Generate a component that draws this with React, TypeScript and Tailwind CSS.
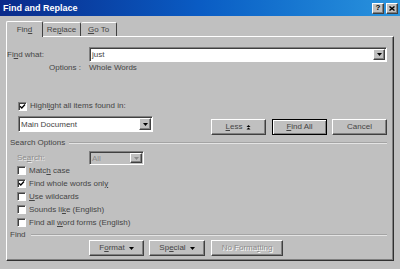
// Find and Replace dialog (classic Windows look)
import React from 'react';

function Arrow({ disabled = false }: { disabled?: boolean }) {
  return (
    <svg width="5" height="3" viewBox="0 0 5 3">
      <polygon points="0,0 5,0 2.5,3" fill={disabled ? '#8a8a8a' : '#000'} />
    </svg>
  );
}

function Combo({ text, className = '', disabled = false }: { text: string; className?: string; disabled?: boolean }) {
  return (
    <div
      className={`flex border border-t-[#808080] border-l-[#808080] border-b-white border-r-white shadow-[inset_1px_1px_0_#404040] ${disabled ? 'bg-[#c0c0c0]' : 'bg-white'} ${className}`}
    >
      <div className={`flex-1 flex items-center pl-[2px] pt-px ${disabled ? 'text-[#8a8a8a]' : 'text-[#454545]'}`}>{text}</div>
      <div className="w-[12px] my-px mr-px flex items-center justify-center bg-[#c0c0c0] border border-t-white border-l-white border-r-[#404040] border-b-[#404040] shadow-[inset_-1px_-1px_0_#808080]">
        <Arrow disabled={disabled} />
      </div>
    </div>
  );
}

function Check({ checked = false, label }: { checked?: boolean; label: React.ReactNode }) {
  return (
    <div className="flex items-center h-[13px] ml-[10px] gap-[3px]">
      <div className="w-[9px] h-[9px] bg-white border border-t-[#808080] border-l-[#808080] border-b-white border-r-white shadow-[inset_1px_1px_0_#404040] flex items-center justify-center">
        {checked && (
          <svg width="7" height="7" viewBox="0 0 7 7">
            <path d="M1 3.2 L2.8 5 L6 1.5" stroke="#000" strokeWidth="1.3" fill="none" />
          </svg>
        )}
      </div>
      <span>{label}</span>
    </div>
  );
}

function Btn({ children, className = '', isDefault = false, disabled = false }: { children: React.ReactNode; className?: string; isDefault?: boolean; disabled?: boolean }) {
  return (
    <div
      className={`h-[16px] flex items-center justify-center gap-[4px] bg-[#c0c0c0] ${
        isDefault
          ? 'border border-black shadow-[inset_1px_1px_0_#fff,inset_-1px_-1px_0_#808080]'
          : 'border border-t-white border-l-white border-r-[#404040] border-b-[#404040] shadow-[inset_-1px_-1px_0_#808080]'
      } ${disabled ? 'text-[#8c8c8c] [text-shadow:1px_1px_0_#fff]' : 'text-[#454545]'} ${className}`}
    >
      {children}
    </div>
  );
}

export default function App() {
  return (
    <div className="w-[400px] h-[269px] overflow-hidden bg-[#c0c0c0] text-[8px] leading-none text-[#454545] font-['Liberation_Sans',Arial,sans-serif]">
      {/* title bar */}
      <div className="h-[16px] flex items-center bg-linear-to-r from-[#0a2a8a] via-[#0a5cc4] to-[#2a94de] pl-[3px] pr-[2px]">
        <span className="flex-1 text-white font-bold text-[9px]">Find and Replace</span>
        <div className="w-[12px] h-[11px] flex items-center justify-center bg-[#c0c0c0] border border-t-white border-l-white border-r-[#404040] border-b-[#404040] shadow-[inset_-1px_-1px_0_#808080] font-bold text-[8px] text-black">
          ?
        </div>
        <div className="w-[12px] h-[11px] ml-[2px] flex items-center justify-center bg-[#c0c0c0] border border-t-white border-l-white border-r-[#404040] border-b-[#404040] shadow-[inset_-1px_-1px_0_#808080]">
          <svg width="6" height="5" viewBox="0 0 6 5">
            <path d="M0.5 0.5 L5.5 4.5 M5.5 0.5 L0.5 4.5" stroke="#000" strokeWidth="1.4" />
          </svg>
        </div>
      </div>

      {/* tabs */}
      <div className="flex items-end h-[16px] mt-[4px] pl-[6px]">
        <div className="relative z-10 -mb-px h-[16px] w-[37px] flex items-center justify-center bg-[#c0c0c0] border-t border-l border-r border-t-white border-l-white border-r-[#404040] rounded-t-[2px]">
          Fin<span className="underline">d</span>
        </div>
        <div className="h-[14px] w-[38px] flex items-center justify-center border-t border-r border-t-white border-r-[#404040] rounded-t-[2px]">
          Re<span className="underline">p</span>lace
        </div>
        <div className="h-[14px] w-[36px] flex items-center justify-center border-t border-r border-t-white border-r-[#404040] rounded-t-[2px]">
          <span className="underline">G</span>o To
        </div>
      </div>

      {/* tab page */}
      <div className="ml-[6px] w-[388px] h-[225px] flex flex-col border border-t-white border-l-white border-r-[#303030] border-b-[#303030] shadow-[inset_-1px_-1px_0_#808080]">
        <div className="flex items-center h-[15px] mt-[10px]">
          <span className="w-[82px]">
            Fi<span className="underline">n</span>d what:
          </span>
          <Combo text="just" className="w-[298px] h-[15px]" />
        </div>
        <div className="flex items-center h-[12px] ml-[42px]">
          <span className="w-[40px]">Options :</span>
          <span>Whole Words</span>
        </div>

        <div className="flex items-center h-[12px] mt-[26px] ml-[1px]">
          <Check
            checked
            label={
              <>
                Highl<span className="underline">i</span>ght all items found in:
              </>
            }
          />
        </div>

        <div className="flex items-start h-[19px] mt-[4px]">
          <Combo text="Main Document" className="ml-[11px] w-[135px] h-[16px]" />
          <Btn className="ml-[58px] mt-[3px] w-[55px]">
            <span>
              <span className="underline">L</span>ess
            </span>
            <svg width="5" height="5" viewBox="0 0 5 5">
              <polygon points="2.5,0 4.5,2 0.5,2" fill="#000" />
              <polygon points="2.5,2.5 4.5,4.5 0.5,4.5" fill="#000" />
            </svg>
          </Btn>
          <Btn isDefault className="ml-[6px] mt-[3px] w-[55px]">
            <span>
              <span className="underline">F</span>ind All
            </span>
          </Btn>
          <Btn className="ml-[5px] mt-[3px] w-[55px]">Cancel</Btn>
        </div>

        <div className="flex items-center h-[12px] mt-[2px] ml-[3px] mr-[6px]">
          <span>Search Options</span>
          <div className="flex-1 ml-[4px] h-[2px] border-t border-t-[#a4a4a4] border-b border-b-[#e4e4e4]" />
        </div>

        <div className="flex items-start h-[13px] mt-[2px] ml-[10px]">
          <span className="w-[72px] leading-[14px] text-[#8c8c8c] [text-shadow:1px_1px_0_#e8e8e8]">
            Se<span className="underline">a</span>rch:
          </span>
          <Combo text="All" disabled className="w-[55px] h-[14px]" />
        </div>

        <Check
          label={
            <>
              Matc<span className="underline">h</span> case
            </>
          }
        />
        <Check
          checked
          label={
            <>
              Find whole words onl<span className="underline">y</span>
            </>
          }
        />
        <Check
          label={
            <>
              <span className="underline">U</span>se wildcards
            </>
          }
        />
        <Check
          label={
            <>
              Sounds li<span className="underline">k</span>e (English)
            </>
          }
        />
        <Check
          label={
            <>
              Find all <span className="underline">w</span>ord forms (English)
            </>
          }
        />

        <div className="flex items-center h-[11px] ml-[3px] mr-[6px]">
          <span>Find</span>
          <div className="flex-1 ml-[5px] h-[2px] border-t border-t-[#a4a4a4] border-b border-b-[#e4e4e4]" />
        </div>

        <div className="flex items-center h-[16px] ml-[82px]">
          <Btn className="w-[55px]">
            <span>
              F<span className="underline">o</span>rmat
            </span>
            <Arrow />
          </Btn>
          <Btn className="ml-[5px] w-[56px]">
            <span>
              Sp<span className="underline">e</span>cial
            </span>
            <Arrow />
          </Btn>
          <Btn disabled className="ml-[6px] w-[72px]">
            <span>
              No Forma<span className="underline">t</span>ting
            </span>
          </Btn>
        </div>
      </div>
    </div>
  );
}
